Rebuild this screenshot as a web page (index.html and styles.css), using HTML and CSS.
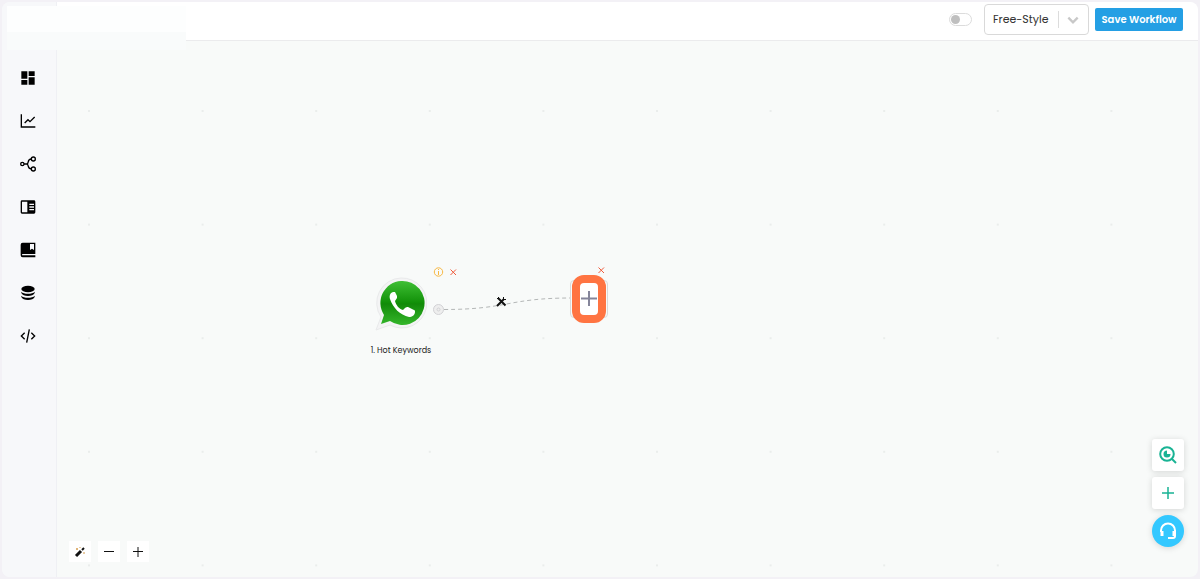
FILE: index.html
```html
<!DOCTYPE html>
<html lang="en">
<head>
    <meta charset="UTF-8">
    <meta name="viewport" content="width=device-width, initial-scale=1.0">
    <title>Workflow Builder</title>
    <link rel="stylesheet" href="styles.css">
</head>
<body>
    <div class="app">
        <div class="brand"></div>

        <nav class="sidebar">
            <a href="#" aria-label="Dashboard">
                <svg viewBox="0 0 24 24"><path d="M2 13h9V2H2v11zm0 9h9v-7H2v7zm11 0h9V11h-9v11zm0-20v7h9V2h-9z"/></svg>
            </a>
            <a href="#" aria-label="Analytics">
                <svg viewBox="0 0 24 24" class="line"><path d="M2 2v19h21M7 15l5-5 3 3 7-7"/></svg>
            </a>
            <a href="#" aria-label="Workflows">
                <svg viewBox="0 0 24 24" class="line"><circle cx="3.5" cy="12" r="2.5"/><circle cx="20" cy="4.500" r="3"/><circle cx="20" cy="19.500" r="3"/><path d="M6 12h5M17 4.500c-7 0-3 7.500-7 7.500 4 0 0 7.500 7 7.500"/></svg>
            </a>
            <a href="#" aria-label="Pages">
                <svg viewBox="0 0 24 24"><path fill-rule="evenodd" d="M3 2h18a2 2 0 0 1 2 2v16a2 2 0 0 1-2 2H3a2 2 0 0 1-2-2V4a2 2 0 0 1 2-2zM3 4v16h8V4zM14 7v2h7V7zM14 11v2h7v-2zM14 15v2h7v-2z"/></svg>
            </a>
            <a href="#" aria-label="Library">
                <svg viewBox="0 0 24 24"><path fill-rule="evenodd" d="M4 1h19v17H4a1 1 0 0 0 0 2h19v3H4a3 3 0 0 1-3-3V4a3 3 0 0 1 3-3zM15 3v9l3-2 3 2V3z"/></svg>
            </a>
            <a href="#" aria-label="Database">
                <svg viewBox="0 0 24 24"><ellipse cx="12" cy="6" rx="10" ry="5"/><path d="M2 10c3 4 17 4 20 0v2c-2 6-18 6-20 0zM2 16c3 4 17 4 20 0v2c-2 6-18 6-20 0z"/></svg>
            </a>
            <a href="#" aria-label="Developer">
                <svg viewBox="0 0 24 24" class="line"><path d="M7 7l-5 5 5 5M17 7l5 5-5 5M14 2l-4 20"/></svg>
            </a>
        </nav>

        <div class="main">
            <header class="topbar">
                <input type="checkbox" class="toggle" aria-label="Active">
                <div class="select-box">
                    <select aria-label="Workflow type">
                        <option>Free-Style</option>
                    </select>
                    <svg class="chevron" viewBox="0 0 12 12"><path d="M2 4l4 4 4-4"/></svg>
                </div>
                <button type="button" class="save-btn">Save Workflow</button>
            </header>

            <main class="canvas">
                <svg class="edges">
                    <defs>
                        <pattern id="dots" x="31" y="69" width="113.6" height="113.6" patternUnits="userSpaceOnUse">
                            <circle cx="1" cy="1" r="0.8" fill="#d9dcdb"/>
                        </pattern>
                    </defs>
                    <rect width="100%" height="100%" fill="url(#dots)"/>
                    <path class="edge" d="M387 268.5C451 268.5 451 257 514 257"/>
                </svg>

                <div class="node trigger">
                    <svg class="whatsapp" viewBox="0 0 52 54">
                        <defs>
                            <linearGradient id="green" x1="0" y1="0" x2="0" y2="1">
                                <stop offset="0" stop-color="#3fbf35"/>
                                <stop offset="0.5" stop-color="#119008"/>
                                <stop offset="0.52" stop-color="#128a09"/>
                                <stop offset="1" stop-color="#35b62b"/>
                            </linearGradient>
                        </defs>
                        <path d="M26 1a25 25 0 1 1-11 47L1 53l5-13A25 25 0 0 1 26 1z" fill="#f4f4f5" stroke="#e9eaeb"/>
                        <path d="M26 4a22 22 0 1 1-11 40L6 47l3-9A22 22 0 0 1 26 4z" fill="url(#green)"/>
                        <path d="M18 15c-3 1-4 4-3 7 3 9 10 16 19 18 3 0 6-2 6-5 0-1 0-2-1-2l-6-3c-1 0-2 0-3 1l-2 2c-4-1-7-5-8-9l2-3v-2l-2-4z" fill="#fff"/>
                    </svg>
                    <span class="node-label">1. Hot Keywords</span>
                </div>
                <button type="button" class="pin info" aria-label="Node info">
                    <svg viewBox="0 0 12 12"><circle cx="6.5" cy="6" r="4.2"/><path d="M6.5 3v1M6.5 5v4"/></svg>
                </button>
                <button type="button" class="pin remove remove-trigger" aria-label="Remove node">
                    <svg viewBox="0 0 12 12"><path d="M3.500 3.500l5.500 5.500M9 3.500L3.500 9"/></svg>
                </button>
                <svg class="pin handle" viewBox="0 0 12 12"><circle cx="6.5" cy="6.5" r="5"/><circle cx="6.5" cy="6.5" r="1.5"/></svg>
                <svg class="pin tools" viewBox="0 0 12 12"><path d="M3 3l7.500 7.500M9 4l-7 7"/><path d="M2 4l2-2M8.500 2v2.500H11" class="thin"/></svg>

                <button type="button" class="pin remove remove-step" aria-label="Remove step">
                    <svg viewBox="0 0 12 12"><path d="M3.500 3.500l5.500 5.500M9 3.500L3.500 9"/></svg>
                </button>
                <div class="node step">
                    <button type="button" class="add-step" aria-label="Add step">
                        <svg viewBox="0 0 18 18"><path d="M9 1v15M1 8.500h16"/></svg>
                    </button>
                </div>

                <div class="controls">
                    <button type="button" aria-label="Auto layout">
                        <svg viewBox="0 0 12 12"><path d="M2 10l5-5" stroke-width="3"/><path d="M8 4l2-2" stroke-width="2"/><path d="M3 2v2M2 3h2M6 1v1M10 6v2" stroke="#d49a4a"/></svg>
                    </button>
                    <button type="button" aria-label="Zoom out">
                        <svg viewBox="0 0 12 12"><path d="M1 5.500h10"/></svg>
                    </button>
                    <button type="button" aria-label="Zoom in">
                        <svg viewBox="0 0 12 12"><path d="M1 5.500h10M6 1v10"/></svg>
                    </button>
                </div>

                <div class="floating">
                    <button type="button" aria-label="Preview">
                        <svg viewBox="0 0 18 18"><circle cx="8" cy="8" r="6.8"/><path d="M13 13l4 4"/><path d="M8 4.500A3.500 3.500 0 1 0 11.500 8H8z" class="solid"/></svg>
                    </button>
                    <button type="button" aria-label="Add block">
                        <svg viewBox="0 0 18 18"><path d="M9 3v12M3 9h12" stroke-width="1.5"/></svg>
                    </button>
                    <button type="button" class="support" aria-label="Support">
                        <svg viewBox="0 0 18 18"><path d="M2 10V8.500a7 7 0 0 1 14 0V14q0 2-2 2H9"/><path d="M3 9v5M15 9v5" stroke-width="3"/></svg>
                    </button>
                </div>
            </main>
        </div>
    </div>
</body>
</html>
```

FILE: styles.css
```css
* {
    margin: 0;
    padding: 0;
    box-sizing: border-box;
}
body {
    font-family: 'Poppins', 'Inter', sans-serif;
    background: #f3f1f6;
    color: #333;
    padding: 2px;
}
button {
    border: none;
    background: none;
    font-family: inherit;
    cursor: pointer;
}
svg {
    display: block;
}
.app {
    position: relative;
    display: flex;
    height: calc(100vh - 4px);
    border-radius: 8px;
    overflow: hidden;
    background: #f8faf9;
}
.brand {
    position: absolute;
    top: 4px;
    left: 5px;
    z-index: 2;
    width: 179px;
    height: 44px;
    background: linear-gradient(#fdfefe 60%, #f9fbfb 60%);
}

/* Sidebar */
.sidebar {
    display: flex;
    flex-direction: column;
    align-items: center;
    gap: 27px;
    width: 55px;
    padding: 68px 2px 0 0;
    background: #f7f8fa;
    border-right: 1px solid #eff0f4;
}
.sidebar svg {
    width: 16px;
    height: 16px;
    fill: #000;
}
.sidebar .line {
    fill: none;
    stroke: #000;
    stroke-width: 2;
}

/* Top bar */
.main {
    flex: 1;
    display: flex;
    flex-direction: column;
}
.topbar {
    display: flex;
    justify-content: flex-end;
    align-items: center;
    height: 39px;
    padding: 0 15px 3px 0;
    background: #fff;
    border-bottom: 1px solid #ebebed;
}
.toggle {
    appearance: none;
    width: 23px;
    height: 13px;
    margin-right: 12px;
    padding: 1px;
    border: 1px solid #dcdcdc;
    border-radius: 7px;
    background: #fff;
}
.toggle::before {
    content: "";
    display: block;
    width: 9px;
    height: 9px;
    border-radius: 50%;
    background: #bfbfbf;
}
.select-box {
    position: relative;
    width: 105px;
    margin-right: 6px;
}
.select-box select {
    appearance: none;
    width: 100%;
    height: 31px;
    padding: 0 8px 2px;
    border: 1px solid #d9d9d9;
    border-radius: 4px;
    background: #fff;
    color: #333;
    font-family: inherit;
    font-size: 11px;
}
.select-box::after {
    content: "";
    position: absolute;
    top: 7px;
    right: 30px;
    width: 1px;
    height: 17px;
    background: #dcdcdc;
}
.chevron {
    position: absolute;
    top: 9px;
    right: 9px;
    width: 14px;
    height: 14px;
    fill: none;
    stroke: #c8c8c8;
    stroke-width: 2;
}
.save-btn {
    width: 88px;
    height: 23px;
    border-radius: 2px;
    background: #249fe4;
    color: #fff;
    font-size: 10px;
    font-weight: 600;
    white-space: nowrap;
}

/* Canvas */
.canvas {
    position: relative;
    flex: 1;
}
.edges {
    width: 100%;
    height: 100%;
    position: absolute;
}
.edge {
    fill: none;
    stroke: #b4b7b7;
    stroke-dasharray: 4 3;
}
.node,
.pin {
    position: absolute;
}
.trigger {
    top: 236px;
    left: 304px;
    width: 80px;
    display: flex;
    flex-direction: column;
    align-items: center;
    gap: 14px;
}
.whatsapp {
    width: 52px;
    height: 54px;
}
.node-label {
    font-size: 8px;
    line-height: 12px;
    color: #222;
    white-space: nowrap;
}
.pin,
.pin svg {
    width: 12px;
    height: 12px;
    fill: none;
}
.info {
    top: 225px;
    left: 375px;
    stroke: #f7b844;
}
.remove {
    stroke: #ef5b3c;
}
.remove-trigger {
    top: 225px;
    left: 390px;
}
.remove-step {
    top: 223px;
    left: 538px;
}
.handle {
    top: 262px;
    left: 375px;
    fill: #eee;
    stroke: #d2d2d5;
}
.tools {
    top: 254px;
    left: 438px;
    stroke: #111;
    stroke-width: 2;
}
.thin {
    stroke-width: 1;
}
.step {
    top: 239px;
    left: 513px;
    display: flex;
    align-items: center;
    justify-content: center;
    width: 38px;
    height: 38px;
    border: 1px solid #d8dada;
    border-radius: 4px;
}
.add-step {
    flex: none;
    display: flex;
    align-items: center;
    justify-content: center;
    width: 34px;
    height: 48px;
    border: 8px solid #ff7442;
    border-radius: 12px;
    background: #fff;
}
.add-step svg {
    flex: none;
    width: 18px;
    height: 18px;
    stroke: #85859a;
    stroke-width: 2;
}

.controls {
    position: absolute;
    left: 12px;
    bottom: 15px;
    display: flex;
    gap: 7px;
}
.controls button {
    display: flex;
    align-items: center;
    justify-content: center;
    width: 22px;
    height: 21px;
    background: #fff;
}
.controls svg {
    width: 12px;
    height: 12px;
    fill: none;
    stroke: #111;
    stroke-width: 1;
}
.floating {
    position: absolute;
    right: 14px;
    bottom: 30px;
    display: flex;
    flex-direction: column;
    gap: 6px;
}
.floating button {
    display: flex;
    align-items: center;
    justify-content: center;
    width: 32px;
    height: 32px;
    border-radius: 3px;
    background: #fff;
    box-shadow: 0 1px 6px rgba(0, 0, 0, 0.15);
}
.floating svg {
    width: 18px;
    height: 18px;
    fill: none;
    stroke: #19b394;
    stroke-width: 2;
}
.floating .solid {
    fill: #19b394;
    stroke: none;
}
.floating .support {
    border-radius: 50%;
    background: #33c8ff;
}
.floating .support svg {
    stroke: #fff;
}
```
